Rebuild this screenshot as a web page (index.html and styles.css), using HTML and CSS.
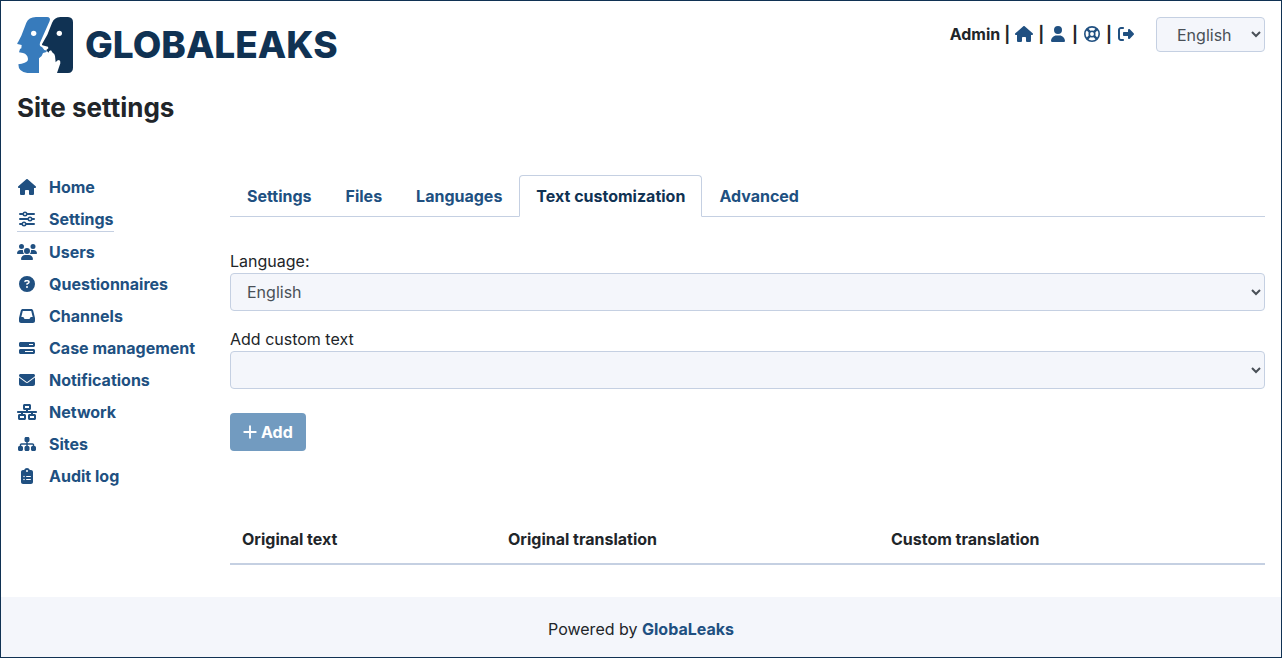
FILE: index.html
```html
<!DOCTYPE html>
<html lang="en">
<head>
<meta charset="utf-8">
<title>GlobaLeaks - Site settings</title>
<meta name="viewport" content="width=device-width, initial-scale=1">
<link rel="stylesheet" href="styles.css">
</head>
<body>
<svg class="symbols" aria-hidden="true">
  <symbol id="house" viewBox="0 0 576 512"><path d="M575.8 255.5c0 18-15 32.1-32 32.1h-32l.7 160.2c0 2.7-.2 5.4-.5 8.1V472c0 22.1-17.9 40-40 40H456c-1.1 0-2.2 0-3.3-.1c-1.4 .1-2.8 .1-4.2 .1H416 392c-22.1 0-40-17.9-40-40V448 384c0-17.7-14.3-32-32-32H256c-17.7 0-32 14.3-32 32v64 24c0 22.1-17.9 40-40 40H160 128.1c-1.5 0-3-.1-4.5-.2c-1.2 .1-2.4 .2-3.6 .2H104c-22.1 0-40-17.9-40-40V360c0-.9 0-1.9 .1-2.8V287.6H32c-18 0-32-14-32-32.1c0-9 3-17 10-24L266.4 8c7-7 15-8 22-8s15 2 21 7L564.8 231.5c8 7 12 15 11 24z"/></symbol>
  <symbol id="user" viewBox="0 0 448 512"><path d="M224 256A128 128 0 1 0 224 0a128 128 0 1 0 0 256zm-45.7 48C79.8 304 0 383.8 0 482.3C0 498.7 13.3 512 29.7 512H418.3c16.4 0 29.7-13.3 29.7-29.7C448 383.8 368.2 304 269.7 304H178.3z"/></symbol>
  <symbol id="life-ring" viewBox="0 0 512 512"><g fill="none" stroke="currentColor" stroke-width="52"><circle cx="256" cy="256" r="230"/><circle cx="256" cy="256" r="88"/><path stroke-width="76" d="M92 92l102 102M420 92L318 194M92 420l102-102M420 420L318 318"/></g></symbol>
  <symbol id="logout" viewBox="0 0 512 512"><path d="M377.9 105.9L500.7 228.7c7.2 7.2 11.3 17.1 11.3 27.3s-4.1 20.1-11.3 27.3L377.9 406.1c-6.4 6.4-15 9.9-24 9.9c-18.7 0-33.9-15.2-33.9-33.9l0-62.1-128 0c-17.7 0-32-14.3-32-32l0-64c0-17.7 14.3-32 32-32l128 0 0-62.1c0-18.7 15.2-33.9 33.9-33.9c9 0 17.6 3.6 24 9.9zM160 96L96 96c-17.7 0-32 14.3-32 32l0 256c0 17.7 14.3 32 32 32l64 0c17.7 0 32 14.3 32 32s-14.3 32-32 32l-64 0c-53 0-96-43-96-96L0 128C0 75 43 32 96 32l64 0c17.7 0 32 14.3 32 32s-14.3 32-32 32z"/></symbol>
  <symbol id="sliders" viewBox="0 0 512 512"><g fill="none" stroke="currentColor"><path stroke-width="64" stroke-linecap="round" d="M32 96h84M268 96h212M32 256h244M428 256h52M32 416h52M236 416h244"/><g stroke-width="48"><circle cx="192" cy="96" r="56"/><circle cx="352" cy="256" r="56"/><circle cx="160" cy="416" r="56"/></g></g></symbol>
  <symbol id="users" viewBox="0 0 640 512"><path d="M144 0a80 80 0 1 1 0 160A80 80 0 1 1 144 0zM512 0a80 80 0 1 1 0 160A80 80 0 1 1 512 0zM0 298.7C0 239.8 47.8 192 106.7 192h42.7c15.9 0 31 3.5 44.6 9.7c-1.3 7.2-1.9 14.7-1.9 22.3c0 38.2 16.8 72.5 43.3 96c-.2 0-.4 0-.7 0H21.3C9.6 320 0 310.4 0 298.7zM405.3 320c-.2 0-.4 0-.7 0c26.6-23.5 43.3-57.8 43.3-96c0-7.6-.7-15-1.9-22.3c13.6-6.3 28.7-9.7 44.6-9.7h42.7C592.2 192 640 239.8 640 298.7c0 11.8-9.6 21.3-21.3 21.3H405.3zM224 224a96 96 0 1 1 192 0 96 96 0 1 1 -192 0zM128 485.3C128 411.7 187.7 352 261.3 352H378.7C452.3 352 512 411.7 512 485.3c0 14.7-11.9 26.7-26.7 26.7H154.7c-14.7 0-26.7-11.9-26.7-26.7z"/></symbol>
  <symbol id="question" viewBox="0 0 512 512"><path d="M256 512A256 256 0 1 0 256 0a256 256 0 1 0 0 512zM169.8 165.3c7.9-22.3 29.1-37.3 52.8-37.3h58.3c34.9 0 63.1 28.3 63.1 63.1c0 22.6-12.1 43.5-31.7 54.8L280 264.4c-.2 13-10.9 23.6-24 23.6c-13.3 0-24-10.7-24-24V250.5c0-8.6 4.6-16.5 12.1-20.8l44.3-25.4c4.7-2.7 7.6-7.7 7.6-13.1c0-8.4-6.8-15.1-15.1-15.1H222.6c-3.4 0-6.4 2.1-7.5 5.3l-.4 1.2c-4.4 12.5-18.2 19-30.6 14.6s-19-18.2-14.6-30.6l.4-1.2zM224 352a32 32 0 1 1 64 0 32 32 0 1 1 -64 0z"/></symbol>
  <symbol id="inbox" viewBox="0 0 512 512"><path d="M121 32C91.6 32 66 52 58.9 80.5L1.9 308.4C.6 313.5 0 318.7 0 323.9V416c0 35.3 28.7 64 64 64H448c35.3 0 64-28.7 64-64V323.9c0-5.2-.6-10.4-1.9-15.5l-57-227.9C446 52 420.4 32 391 32H121zm0 64H391l48 192H387.8c-12.1 0-23.2 6.8-28.6 17.7l-14.3 28.6c-5.4 10.8-16.5 17.7-28.6 17.7H195.8c-12.1 0-23.2-6.8-28.6-17.7l-14.3-28.6c-5.4-10.8-16.5-17.7-28.6-17.7H73L121 96z"/></symbol>
  <symbol id="bars" viewBox="0 0 512 512"><path d="M448 160H320V128H448v32zM48 64C21.5 64 0 85.5 0 112v64c0 26.5 21.5 48 48 48H464c26.5 0 48-21.5 48-48V112c0-26.5-21.5-48-48-48H48zM448 352v32H192V352H448zM48 288c-26.5 0-48 21.5-48 48v64c0 26.5 21.5 48 48 48H464c26.5 0 48-21.5 48-48V336c0-26.5-21.5-48-48-48H48z"/></symbol>
  <symbol id="envelope" viewBox="0 0 512 512"><path d="M48 64C21.5 64 0 85.5 0 112c0 15.1 7.1 29.3 19.2 38.4L236.8 313.6c11.4 8.5 27 8.5 38.4 0L492.8 150.4c12.1-9.1 19.2-23.3 19.2-38.4c0-26.5-21.5-48-48-48H48zM0 176V384c0 35.3 28.7 64 64 64H448c35.3 0 64-28.7 64-64V176L294.4 339.2c-22.8 17.1-54 17.1-76.8 0L0 176z"/></symbol>
  <symbol id="network" viewBox="0 0 640 512"><path d="M256 64H384v64H256V64zM240 0c-26.5 0-48 21.5-48 48v96c0 26.5 21.5 48 48 48h48v32H32c-17.7 0-32 14.3-32 32s14.3 32 32 32h96v32H80c-26.5 0-48 21.5-48 48v96c0 26.5 21.5 48 48 48H240c26.5 0 48-21.5 48-48V368c0-26.5-21.5-48-48-48H192V288H448v32H400c-26.5 0-48 21.5-48 48v96c0 26.5 21.5 48 48 48H560c26.5 0 48-21.5 48-48V368c0-26.5-21.5-48-48-48H512V288h96c17.7 0 32-14.3 32-32s-14.3-32-32-32H352V192h48c26.5 0 48-21.5 48-48V48c0-26.5-21.5-48-48-48H240zM96 448V384H224v64H96zm320-64H544v64H416V384z"/></symbol>
  <symbol id="sitemap" viewBox="0 0 576 512"><path d="M208 80c0-26.5 21.5-48 48-48h64c26.5 0 48 21.5 48 48v64c0 26.5-21.5 48-48 48h-8v40H464c30.9 0 56 25.1 56 56v32h8c26.5 0 48 21.5 48 48v64c0 26.5-21.5 48-48 48H464c-26.5 0-48-21.5-48-48V368c0-26.5 21.5-48 48-48h8V288c0-4.4-3.6-8-8-8H312v40h8c26.5 0 48 21.5 48 48v64c0 26.5-21.5 48-48 48H256c-26.5 0-48-21.5-48-48V368c0-26.5 21.5-48 48-48h8V280H112c-4.4 0-8 3.6-8 8v32h8c26.5 0 48 21.5 48 48v64c0 26.5-21.5 48-48 48H48c-26.5 0-48-21.5-48-48V368c0-26.5 21.5-48 48-48h8V288c0-30.9 25.1-56 56-56H264V192h-8c-26.5 0-48-21.5-48-48V80z"/></symbol>
  <symbol id="clipboard" viewBox="0 0 384 512"><path d="M192 0c-41.8 0-77.4 26.7-90.5 64H64C28.7 64 0 92.7 0 128V448c0 35.3 28.7 64 64 64H320c35.3 0 64-28.7 64-64V128c0-35.3-28.7-64-64-64H282.5C269.4 26.7 233.8 0 192 0zm0 64a32 32 0 1 1 0 64 32 32 0 1 1 0-64zM72 272a24 24 0 1 1 48 0 24 24 0 1 1 -48 0zm104-16H304c8.8 0 16 7.2 16 16s-7.2 16-16 16H176c-8.8 0-16-7.2-16-16s7.2-16 16-16zM72 368a24 24 0 1 1 48 0 24 24 0 1 1 -48 0zm88 0c0-8.8 7.2-16 16-16H304c8.8 0 16 7.2 16 16s-7.2 16-16 16H176c-8.8 0-16-7.2-16-16z"/></symbol>
  <symbol id="plus" viewBox="0 0 448 512"><path fill="none" stroke="currentColor" stroke-width="60" stroke-linecap="round" d="M224 72v368M40 256h368"/></symbol>
</svg>

<div class="page">
  <header class="header">
    <a class="logo" href="#">
      <svg class="logo-mark" viewBox="51 51 168 168" aria-hidden="true">
        <path fill="#377bbc" d="M108 51H141Q153 52 149 63L120 128Q117 139 126 141L133 150L142 152Q139 158 129 159Q126 171 117 175V219H82Q55 216 55 193Q65 191 74 188Q84 185 84 177Q83 163 69 159L57 157L60 147L64 145L65 135L52 132Q51 129 54 127L64 107L79 68Q86 52 108 51Z"/>
        <path fill="#103253" d="M181 51H204Q219 52 219 67V203Q219 218 204 219H171L181 190Q182 181 177 180Q172 180 167 187L165 168Q164 160 158 158L153 151L148 153L145 158L139 150L145 145L144 140L127 136Q124 133 128 129L142 104L156 69Q162 52 181 51Z"/>
        <circle cx="101" cy="100" r="8" fill="#fff"/><circle cx="178" cy="100" r="8" fill="#fff"/>
      </svg>
      <span class="logo-text">GLOBALEAKS</span>
    </a>
    <div class="session">
      <span>Admin</span><span>|</span>
      <a href="#" aria-label="Home"><svg class="icon"><use href="#house"/></svg></a><span>|</span>
      <a href="#" aria-label="Preferences"><svg class="icon"><use href="#user"/></svg></a><span>|</span>
      <a href="#" aria-label="Support"><svg class="icon"><use href="#life-ring"/></svg></a><span>|</span>
      <a href="#" aria-label="Logout"><svg class="icon"><use href="#logout"/></svg></a>
      <select class="select select-small" aria-label="Interface language"><option>English</option></select>
    </div>
  </header>
  <h1 class="title">Site settings</h1>

  <div class="columns">
    <nav class="sidebar" aria-label="Administration">
      <a href="#"><svg class="icon"><use href="#house"/></svg>Home</a>
      <a href="#" class="current"><svg class="icon"><use href="#sliders"/></svg>Settings</a>
      <a href="#"><svg class="icon"><use href="#users"/></svg>Users</a>
      <a href="#"><svg class="icon"><use href="#question"/></svg>Questionnaires</a>
      <a href="#"><svg class="icon"><use href="#inbox"/></svg>Channels</a>
      <a href="#"><svg class="icon"><use href="#bars"/></svg>Case management</a>
      <a href="#"><svg class="icon"><use href="#envelope"/></svg>Notifications</a>
      <a href="#"><svg class="icon"><use href="#network"/></svg>Network</a>
      <a href="#"><svg class="icon"><use href="#sitemap"/></svg>Sites</a>
      <a href="#"><svg class="icon"><use href="#clipboard"/></svg>Audit log</a>
    </nav>
    <main class="main">
      <nav class="tabs" aria-label="Settings sections">
        <a href="#">Settings</a>
        <a href="#">Files</a>
        <a href="#">Languages</a>
        <a href="#" class="active" aria-current="page">Text customization</a>
        <a href="#">Advanced</a>
      </nav>
      <form class="form">
        <div class="field">
          <label for="language">Language:</label>
          <select class="select" id="language"><option>English</option></select>
        </div>
        <div class="field">
          <label for="custom-text">Add custom text</label>
          <select class="select" id="custom-text"><option></option></select>
        </div>
        <button class="button" type="button" disabled><svg class="icon"><use href="#plus"/></svg>Add</button>
      </form>
      <table class="table">
        <colgroup><col class="col-text"><col class="col-translation"><col></colgroup>
        <thead><tr><th scope="col">Original text</th><th scope="col">Original translation</th><th scope="col">Custom translation</th></tr></thead>
      </table>
    </main>
  </div>
  <footer class="footer">Powered by <a href="#">GlobaLeaks</a></footer>
</div>
</body>
</html>
```
FILE: styles.css
```css
* { box-sizing: border-box; }

body {
  margin: 0;
  background: #fff;
  color: #212529;
  font: 16px/24px Inter, "Liberation Sans", sans-serif;
}

a { color: #205081; font-weight: 700; text-decoration: none; }

.symbols { display: none; }

.icon { width: 20px; height: 16px; fill: currentColor; flex: none; display: block; }

.page {
  min-height: 100vh;
  display: flex;
  flex-direction: column;
  border: 1px solid #103253;
}

.header {
  display: flex;
  justify-content: space-between;
  align-items: flex-start;
  padding: 16px 16px 0;
}

.logo { display: flex; align-items: center; gap: 12px; color: #103253; }
.logo-mark { width: 56px; height: 56px; }
.logo-text { font-size: 37px; line-height: 56px; font-weight: 800; }

.session { display: flex; align-items: flex-start; gap: 4px; font-weight: 700; line-height: 34px; }
.session a { display: flex; align-items: center; height: 34px; }

.select {
  display: block;
  width: 100%;
  height: 38px;
  padding: 6px 12px;
  border: 1px solid #c5d0e2;
  border-radius: 4px;
  background: #f4f6fb;
  color: #495057;
  font: inherit;
  font-weight: 400;
}
.select:not(.select-small) { padding-right: 0; }
.select-small { width: 109px; height: 35px; margin-left: 16px; padding: 4px 0 4px 16px; line-height: 24px; }

.title { margin: 16px 16px 0; font-size: 26px; line-height: 38px; font-weight: 700; }

.columns { display: flex; gap: 32px; padding: 44px 16px 32px; }

.sidebar { display: flex; flex-direction: column; align-items: flex-start; flex: none; min-width: 181px; }
.sidebar a { display: flex; align-items: center; gap: 12px; padding: 4px 0; }
.sidebar .current { padding-bottom: 0; margin-bottom: 4px; border-bottom: 1px solid #c5d0e2; }

.main { flex: 1; min-width: 0; padding-top: 4px; }

.tabs { display: flex; border-bottom: 1px solid #c5d0e2; }
.tabs a { padding: 8px 16px; margin-bottom: -1px; border: 1px solid transparent; border-radius: 4px 4px 0 0; }
.tabs .active { color: #103253; background: #fff; border-color: #c5d0e2 #c5d0e2 #fff; }

.form { padding-top: 32px; }
.field { margin-bottom: 16px; }
.field label { display: block; }

.button {
  display: flex;
  align-items: center;
  gap: 4px;
  height: 38px;
  margin-top: 24px;
  padding: 0 13px;
  border: 0;
  border-radius: 4px;
  background: #729bc0;
  color: #fff;
  font: inherit;
  font-weight: 700;
}
.button .icon { width: 14px; }

.table { width: 100%; margin-top: 64px; border-collapse: collapse; table-layout: fixed; }
.table th { padding: 12px; text-align: left; font-weight: 700; border-bottom: 2px solid #c5d0e2; }
.col-text { width: 25.7%; }
.col-translation { width: 37%; }

.footer { margin-top: auto; padding: 20px 16px 16px; background: #f4f6fb; text-align: center; }
```
